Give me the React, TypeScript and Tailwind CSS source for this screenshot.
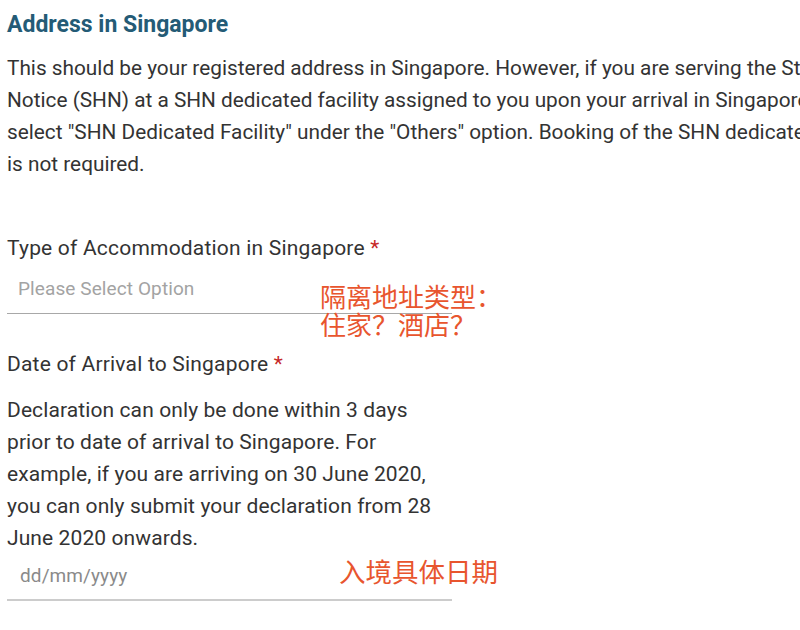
import React from "react";

const font = { fontFamily: "Roboto, 'Noto Sans CJK SC', sans-serif" };

export default function App() {
  return (
    <div
      className="relative w-[800px] h-[630px] overflow-hidden bg-white text-[#333333] pl-[7px]"
      style={font}
    >
      <h2 className="pt-[10px] h-[40px] text-[23px] leading-[30px] font-bold text-[#245b76] whitespace-nowrap">
        Address in Singapore
      </h2>
      <div className="mt-[12px] text-[20.8px] leading-[32px] whitespace-nowrap">
        <div>This should be your registered address in Singapore. However, if you are serving the Stay-Home</div>
        <div>Notice (SHN) at a SHN dedicated facility assigned to you upon your arrival in Singapore, please</div>
        <div>select "SHN Dedicated Facility" under the "Others" option. Booking of the SHN dedicated facility</div>
        <div>is not required.</div>
      </div>

      <div className="mt-[53px] text-[21px] tracking-[0.2px] leading-[30px] whitespace-nowrap">
        Type of Accommodation in Singapore <span className="text-[#c62828]">*</span>
      </div>
      <div className="w-[445px] pt-[12px] pb-[10px] border-b border-[#a8a8a8]">
        <div className="pl-[11px] text-[19px] tracking-[0.1px] leading-[28px] text-[#a3a3a3]">Please Select Option</div>
      </div>

      <div className="mt-[35px] text-[21px] tracking-[0.2px] leading-[30px] whitespace-nowrap">
        Date of Arrival to Singapore <span className="text-[#c62828]">*</span>
      </div>
      <div className="mt-[15px] text-[21px] tracking-[0.1px] leading-[32px] whitespace-nowrap">
        <div>Declaration can only be done within 3 days</div>
        <div>prior to date of arrival to Singapore. For</div>
        <div>example, if you are arriving on 30 June 2020,</div>
        <div>you can only submit your declaration from 28</div>
        <div>June 2020 onwards.</div>
      </div>
      <div className="w-[445px] pt-[8px] pb-[9px] border-b-2 border-[#cccccc]">
        <div className="pl-[13px] text-[19px] tracking-[0.1px] leading-[28px] text-[#8a8a8a]">dd/mm/yyyy</div>
      </div>

      <div className="absolute left-[320px] top-[284px] text-[26px] leading-[28px] text-[#e8552e]">
        <div>隔离地址类型：</div>
        <div>住家？酒店？</div>
      </div>
      <div className="absolute left-[339px] top-[559px] text-[26.5px] leading-[28px] text-[#e8552e]">
        入境具体日期
      </div>
    </div>
  );
}
